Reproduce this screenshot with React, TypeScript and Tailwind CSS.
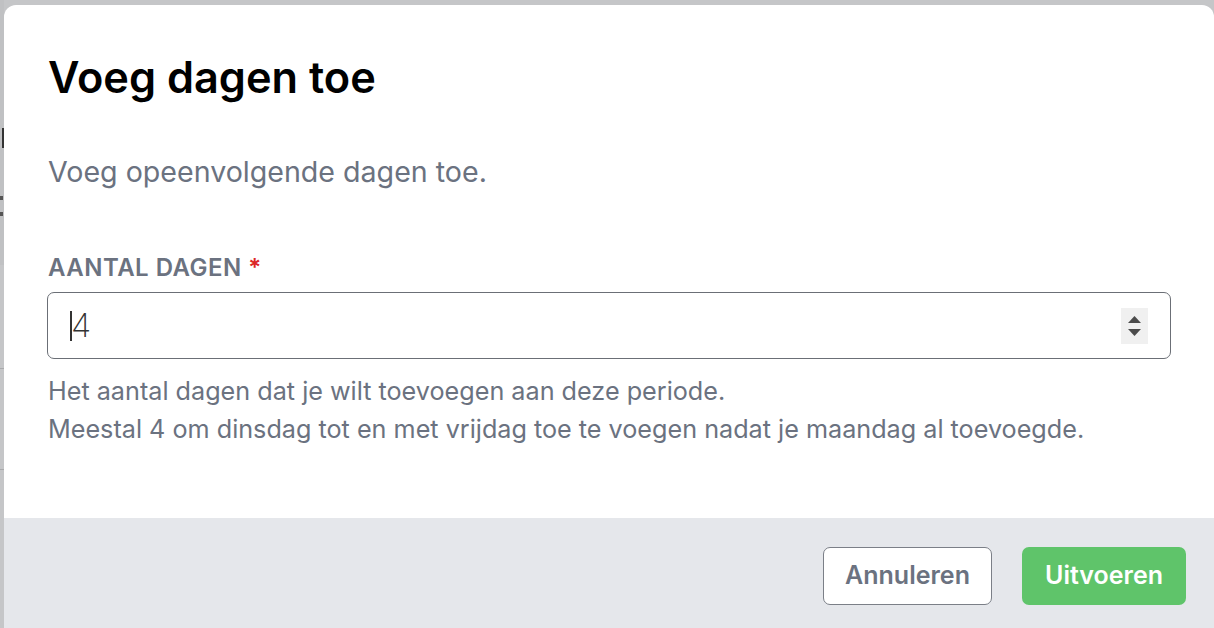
import React from "react";

export default function App() {
  return (
    <div
      className="relative h-[628px] w-[1214px] overflow-hidden bg-[#c5c6c8]"
      style={{ fontFamily: "Inter, 'Noto Sans', sans-serif" }}
    >
      {/* backdrop page fragments */}
      <div className="absolute left-0 top-0 h-[265px] w-[4px] bg-[#c0c1c3]" />
      <div className="absolute left-0 top-[128px] h-[20px] w-[4px] border-r-2 border-[#333]" />
      <div className="absolute left-0 top-[196px] h-[4px] w-[3px] bg-[#555]" />
      <div className="absolute left-0 top-[212px] h-[4px] w-[3px] bg-[#555]" />
      <div className="absolute left-0 top-[368px] h-[1px] w-[4px] bg-[#a9aaac]" />
      <div className="absolute left-0 top-[469px] h-[1px] w-[4px] bg-[#a9aaac]" />

      {/* modal */}
      <div className="absolute left-[4px] top-[5px] flex h-[660px] w-[1210px] flex-col overflow-hidden rounded-[12px] bg-white">
        <div className="flex flex-col px-[43px] pt-[46px]">
          <h1 className="pl-[1px] text-[43.3px] font-semibold leading-[52px] text-black">
            Voeg dagen toe
          </h1>
          <p className="mt-[49px] pl-[1px] text-[28.6px] leading-[40px] text-[#6b7280]">
            Voeg opeenvolgende dagen toe.
          </p>
          <label className="mt-[61px] pl-[1px] text-[24px] font-semibold uppercase leading-[30px] tracking-[0.02em] text-[#6b7280]">
            Aantal dagen <span className="text-[#dc2626]">*</span>
          </label>
          <div className="mt-[9px] flex h-[67px] w-full items-center rounded-[7px] border border-[#6b6f76] pl-[22px] pr-[22px]">
            <span className="h-[30px] w-[2px] bg-[#333]" />
            <span className="-ml-[1px] text-[33px] font-extralight leading-none text-[#333]">4</span>
            <div className="ml-auto flex h-[36px] w-[27px] flex-col items-center justify-center gap-[6px] bg-[#f0f0f0]">
              <svg width="13" height="7" viewBox="0 0 13 7">
                <path d="M6.5 0 L13 7 L0 7 Z" fill="#4b4b4b" />
              </svg>
              <svg width="13" height="7" viewBox="0 0 13 7">
                <path d="M0 0 L13 0 L6.5 7 Z" fill="#4b4b4b" />
              </svg>
            </div>
          </div>
          <p className="mt-[13px] pl-[1px] text-[25.2px] leading-[38px] text-[#6b7280]">
            Het aantal dagen dat je wilt toevoegen aan deze periode.
            <br />
            Meestal 4 om dinsdag tot en met vrijdag toe te voegen nadat je maandag al toevoegde.
          </p>
        </div>
        <div className="mt-auto flex h-[147px] shrink-0 items-start justify-end gap-[30px] bg-[#e5e7eb] pr-[28px] pt-[29px]">
          <button className="flex h-[58px] w-[169px] items-center justify-center rounded-[7px] border border-[#7b7f87] bg-white text-[25px] font-semibold text-[#6b7280]">
            Annuleren
          </button>
          <button className="flex h-[58px] w-[164px] items-center justify-center rounded-[7px] bg-[#5fc46a] text-[25px] font-semibold text-white">
            Uitvoeren
          </button>
        </div>
      </div>
    </div>
  );
}
